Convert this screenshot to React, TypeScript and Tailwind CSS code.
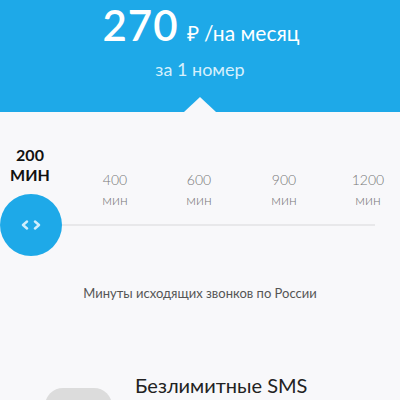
export default function App() {
  const ticks = [
    { value: "400", ml: "ml-[25px]" },
    { value: "600", ml: "ml-[24px]" },
    { value: "900", ml: "ml-[25px]" },
    { value: "1200", ml: "ml-[24px]" },
  ]

  return (
    <div className="w-[400px] h-[400px] overflow-hidden bg-[#f8f8fa] font-['Lato',sans-serif]">
      {/* header */}
      <div className="relative h-[112px] bg-[#1ea9e8] flex flex-col items-center text-white pt-[5px]">
        <div className="flex items-baseline gap-[8px] ml-[2px]">
          <span className="text-[42px] leading-[40px] font-semibold tracking-[1px]">270</span>
          <span className="text-[21px] leading-[24px]">₽ /на месяц</span>
        </div>
        <div className="mt-[13px] text-[18px] leading-[22px] text-[#d6f0fc]">за 1 номер</div>
        <div className="absolute bottom-0 left-1/2 -translate-x-1/2 w-0 h-0 border-l-[16px] border-r-[16px] border-b-[15px] border-l-transparent border-r-transparent border-b-[#f8f8fa]" />
      </div>

      {/* slider */}
      <div className="flex items-start pt-[33px]">
        <div className="w-[60px] text-center text-[16px] leading-[20px] font-bold text-[#111]">
          200
          <br />
          МИН
        </div>
        {ticks.map((t) => (
          <div key={t.value} className={`w-[60px] ${t.ml} mt-[25px] text-center text-[14px] leading-[20px] font-light text-[#777]`}>
            {t.value}
            <br />
            мин
          </div>
        ))}
      </div>

      <div className="flex items-center -mt-[16px]">
        <div className="w-[62px] h-[62px] rounded-full bg-[#1ea9e8] flex items-center justify-center gap-[4px] text-[#cfeefc] shrink-0">
          <svg width="8" height="10" viewBox="0 0 8 10" fill="none" stroke="currentColor" strokeWidth="2.4" strokeLinecap="round" strokeLinejoin="round">
            <path d="M6 1.5 2 5l4 3.5" />
          </svg>
          <svg width="8" height="10" viewBox="0 0 8 10" fill="none" stroke="currentColor" strokeWidth="2.4" strokeLinecap="round" strokeLinejoin="round">
            <path d="M2 1.5 6 5 2 8.5" />
          </svg>
        </div>
        <div className="flex-1 h-[2px] bg-[#e8e8ea] mr-[25px]" />
      </div>

      <div className="mt-[29px] text-center text-[13px] leading-[16px] text-[#555]">
        Минуты исходящих звонков по России
      </div>

      {/* sms option */}
      <div className="flex items-start mt-[72px]">
        <div className="ml-[45px] mt-[15px] w-[67px] h-[36px] rounded-[18px] bg-[#dcdcdc] shrink-0" />
        <div className="ml-[23px] text-[20px] leading-[24px] text-[#222]">Безлимитные SMS</div>
      </div>
    </div>
  )
}
